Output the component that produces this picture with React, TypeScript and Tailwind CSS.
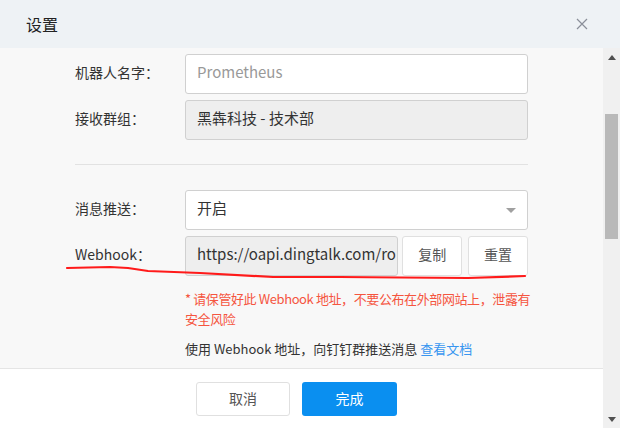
import React from 'react';

const font = { fontFamily: '"Noto Sans CJK SC", "Noto Sans", sans-serif' };

const Label: React.FC<{ children: React.ReactNode }> = ({ children }) => (
  <div className="w-[110px] shrink-0 pb-[3px] text-[14px] text-[#333]">{children}</div>
);

export default function App() {
  return (
    <div className="relative w-[620px] h-[428px] overflow-hidden bg-white" style={font}>
      {/* header */}
      <div className="h-[48px] bg-[#eef2f5] flex items-center justify-between pl-[26px] pr-[32px]">
        <span className="text-[16px] text-[#222]">设置</span>
        <svg width="12" height="12" viewBox="0 0 12 12" className="text-[#8a8f99]">
          <path d="M1 1 L11 11 M11 1 L1 11" stroke="currentColor" strokeWidth="1.2" />
        </svg>
      </div>

      <div className="flex h-[380px]">
        <div className="w-[603px] flex flex-col">
          {/* body */}
          <div className="flex-1 bg-[#f8f8f8] px-[75px] pt-[6px]">
            <div className="flex flex-col gap-[6px]">
              <div className="flex items-center">
                <Label>机器人名字：</Label>
                <div className="flex-1 h-[40px] rounded-[3px] border border-[#d0d0d0] bg-white flex items-center px-[11px] pb-[3px] text-[15px] text-[#999]">
                  Prometheus
                </div>
              </div>
              <div className="flex items-center">
                <Label>接收群组：</Label>
                <div className="flex-1 h-[40px] rounded-[3px] border border-[#d0d0d0] bg-[#eeeeee] flex items-center px-[11px] pb-[3px] text-[15px] text-[#333]">
                  黑犇科技 - 技术部
                </div>
              </div>
            </div>

            <div className="mt-[24px] mb-[25px] h-px bg-[#e2e2e2]" />

            <div className="flex flex-col gap-[6px]">
              <div className="flex items-center">
                <Label>消息推送：</Label>
                <div className="flex-1 h-[40px] rounded-[3px] border border-[#d0d0d0] bg-white flex items-center justify-between px-[11px] text-[15px] text-[#333]">
                  <span className="pb-[3px]">开启</span>
                  <svg width="10" height="5" viewBox="0 0 10 5">
                    <path d="M0 0 H10 L5 5 Z" fill="#a0a0a0" />
                  </svg>
                </div>
              </div>
              <div className="flex items-center">
                <Label>Webhook：</Label>
                <div className="w-[214px] h-[40px] rounded-[3px] border border-[#d0d0d0] bg-[#eeeeee] flex items-center pl-[11px] pb-[3px] text-[15px] text-[#333] overflow-hidden whitespace-nowrap">
                  https://oapi.dingtalk.com/ro
                </div>
                <button className="ml-[4px] w-[60px] h-[40px] rounded-[3px] border border-[#e0e0e0] bg-white pb-[3px] text-[14px] text-[#555]">
                  复制
                </button>
                <button className="ml-[6px] w-[60px] h-[40px] rounded-[3px] border border-[#e0e0e0] bg-white pb-[3px] text-[14px] text-[#555]">
                  重置
                </button>
              </div>
            </div>

            <div className="ml-[110px] mt-[13px] text-[13px] leading-[20px] tracking-[-0.4px] text-[#f5553f]">
              <div className="whitespace-nowrap">* 请保管好此 Webhook 地址，不要公布在外部网站上，泄露有</div>
              <div>安全风险</div>
            </div>
            <div className="ml-[110px] mt-[10px] text-[13px] leading-[20px] text-[#333]">
              使用 Webhook 地址，向钉钉群推送消息 <span className="text-[#3896f0]">查看文档</span>
            </div>
          </div>

          {/* footer */}
          <div className="h-[60px] shrink-0 border-t border-[#e5e5e5] bg-white flex items-start pt-[13px] pl-[196px] gap-[12px]">
            <button className="w-[94px] h-[34px] rounded-[3px] border border-[#e0e0e0] bg-white pb-[2px] text-[14px] text-[#555]">
              取消
            </button>
            <button className="w-[95px] h-[34px] rounded-[3px] bg-[#0a8ff0] pb-[2px] text-[14px] text-white">
              完成
            </button>
          </div>
        </div>

        {/* scrollbar */}
        <div className="w-[17px] bg-[#f0f0f0] flex flex-col items-center">
          <svg width="8" height="5" viewBox="0 0 8 5" className="mt-[7px]">
            <path d="M0 5 L4 0 L8 5 Z" fill="#505050" />
          </svg>
          <div className="mt-[54px] w-[13px] h-[125px] bg-[#b9b9b9]" />
          <div className="flex-1" />
          <svg width="8" height="5" viewBox="0 0 8 5" className="mb-[6px]">
            <path d="M0 0 L8 0 L4 5 Z" fill="#505050" />
          </svg>
        </div>
      </div>

      {/* hand-drawn red underline annotation */}
      <svg className="absolute left-0 top-0 pointer-events-none" width="620" height="428">
        <path
          d="M67 268 L110 267 L128 268 L148 271 L200 273 L273 277 L340 277 L400 277.5 L468 278 L525 276"
          fill="none"
          stroke="#ff1a1a"
          strokeWidth="2.2"
          strokeLinecap="round"
          strokeLinejoin="round"
        />
      </svg>
    </div>
  );
}
